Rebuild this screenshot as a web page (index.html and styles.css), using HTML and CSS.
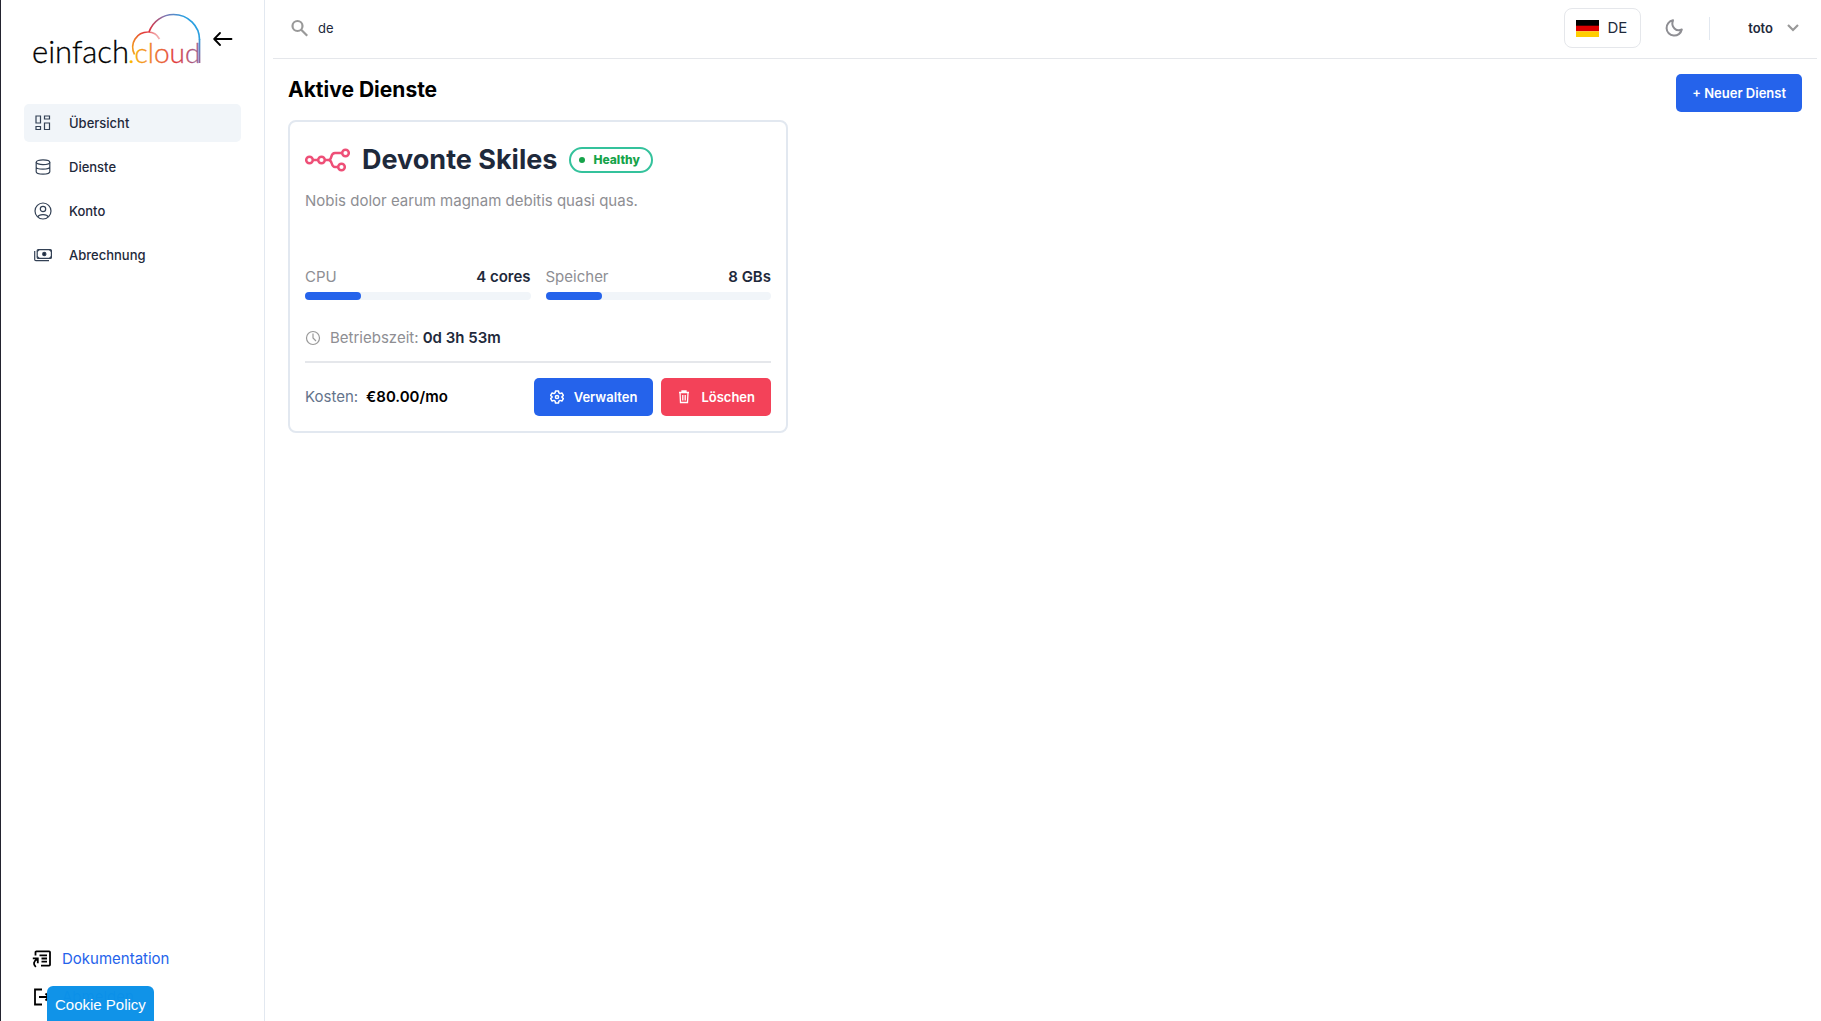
FILE: index.html
```html
<!DOCTYPE html>
<html lang="de">
<head>
<meta charset="utf-8">
<meta name="viewport" content="width=device-width, initial-scale=1">
<title>einfach.cloud – Übersicht</title>
<link rel="stylesheet" href="styles.css">
</head>
<body>
<div class="app">
  <aside class="sidebar">
    <div class="brand">
      <a class="brand-link" href="#" aria-label="einfach.cloud">
        <svg class="logo" width="170" height="54" viewBox="0 0 170 54">
          <defs>
            <linearGradient id="arc" gradientUnits="userSpaceOnUse" x1="116" y1="20" x2="168" y2="14">
              <stop offset="0" stop-color="#e0313d"/>
              <stop offset="0.35" stop-color="#7d78b4"/>
              <stop offset="0.7" stop-color="#2a9fe0"/>
              <stop offset="1" stop-color="#2a9fe0"/>
            </linearGradient>
            <linearGradient id="stem" gradientUnits="userSpaceOnUse" x1="0" y1="24" x2="0" y2="52">
              <stop offset="0" stop-color="#2a9fe0"/>
              <stop offset="1" stop-color="#a0608c"/>
            </linearGradient>
            <linearGradient id="puff" gradientUnits="userSpaceOnUse" x1="100" y1="38" x2="127" y2="24">
              <stop offset="0" stop-color="#f39c1f"/>
              <stop offset="0.6" stop-color="#e2373c"/>
              <stop offset="1" stop-color="#e2373c" stop-opacity="0.3"/>
            </linearGradient>
            <linearGradient id="word" gradientUnits="userSpaceOnUse" x1="97" y1="0" x2="168" y2="0">
              <stop offset="0" stop-color="#fbb900"/>
              <stop offset="0.3" stop-color="#ee7d2b"/>
              <stop offset="0.65" stop-color="#e03a3e"/>
              <stop offset="1" stop-color="#8f6a9f"/>
            </linearGradient>
          </defs>
          <text class="logo-text" x="-1" y="51">einfach</text>
          <text class="logo-text logo-cloud" x="95" y="51" fill="url(#word)" stroke="url(#word)">.cloud</text>
          <path d="M101.500 42.500C96 31 104 20 115 20c5.500 0 9.500 3 11.500 7" fill="none" stroke="url(#puff)" stroke-width="1.700"/>
          <path d="M116 20C120 9 130 2.500 140.500 2.500c15 0 26 12 26 25" fill="none" stroke="url(#arc)" stroke-width="1.700"/>
          <path d="M166.500 27V51" fill="none" stroke="url(#stem)" stroke-width="1.700"/>
        </svg>
      </a>
      <button class="icon-button" type="button" aria-label="Menü einklappen">
        <svg width="20" height="14" viewBox="0 0 20 14" fill="none" stroke="#000" stroke-width="1.800" stroke-linecap="round" stroke-linejoin="round"><path d="M18.500 7H1.500M7 1 1.200 7 7 13"/></svg>
      </button>
    </div>
    <nav class="menu">
      <a class="menu-item active" href="#">
        <svg width="18" height="18" viewBox="0 0 18 18" fill="none" stroke="#334155" stroke-width="1.200"><path d="M2 2h4.500v7H2zM10.500 2h5v3h-5zM10.500 9h5v6.500h-5zM2 12.500h4.500v3H2z"/></svg>
        <span>Übersicht</span>
      </a>
      <a class="menu-item" href="#">
        <svg width="18" height="18" viewBox="0 0 18 18" fill="none" stroke="#334155" stroke-width="1.200"><ellipse cx="9" cy="4.200" rx="6.800" ry="2.400"/><path d="M2.200 4.200v9.600c0 1.300 3 2.400 6.800 2.400s6.800-1.100 6.800-2.400V4.200M2.200 9c0 1.300 3 2.200 6.800 2.200s6.800-.9 6.800-2.200"/></svg>
        <span>Dienste</span>
      </a>
      <a class="menu-item" href="#">
        <svg width="18" height="18" viewBox="0 0 18 18" fill="none" stroke="#334155" stroke-width="1.200"><circle cx="9" cy="9" r="8"/><circle cx="9" cy="7" r="2.700"/><path d="M3.800 15c.6-1.700 2.700-2.400 5.200-2.400s4.600.7 5.200 2.400"/></svg>
        <span>Konto</span>
      </a>
      <a class="menu-item" href="#">
        <svg width="18" height="18" viewBox="0 0 18 18" fill="none" stroke="#334155" stroke-width="1.200"><rect x="3.200" y="3.600" width="14.200" height="8.800" rx="1"/><path d="M.7 5v8.500c0 .8.500 1.200 1.200 1.200H15M3.200 5.600l2-2M17.400 5.600l-2-2M3.200 10.400l2 2M17.400 10.400l-2 2"/><circle cx="10.300" cy="8" r="1.600" fill="#1e293b"/></svg>
        <span>Abrechnung</span>
      </a>
    </nav>
    <div class="side-links">
      <a class="side-link" href="#">
        <svg width="20" height="18" viewBox="0 0 20 18" fill="none" stroke="#000" stroke-width="1.800"><path d="M3.500 5.500V2.200q0-.9.900-.9h12.700q.9 0 .9.900v12.600q0 .9-.9.900H9M7.500 5.300h7.500M9.500 8.500H15M9.500 11.700H15M.8 8.300h5v5M5.300 8.800C1.300 11.500 1 14 3.800 17"/></svg>
        <span>Dokumentation</span>
      </a>
      <a class="side-link" href="#">
        <svg width="20" height="18" viewBox="0 0 20 18" fill="none" stroke="#000" stroke-width="1.800"><path d="M10 1.500H3v15h7M7 9h10M13.500 5.500 17 9l-3.500 3.500"/></svg>
        <span>Abmelden</span>
      </a>
    </div>
  </aside>

  <div class="page">
    <header class="topbar">
      <label class="search">
        <svg width="18" height="18" viewBox="0 0 18 18" fill="none" stroke="#999" stroke-width="2.200"><circle cx="6.500" cy="7" r="5"/><path d="m10.200 10.700 6 6"/></svg>
        <input class="search-input" type="text" value="de" aria-label="Suche">
      </label>
      <div class="tools">
        <button class="lang" type="button">
          <svg width="23" height="17" viewBox="0 0 23 17"><path d="M0 0h23v6H0z" fill="#000"/><path d="M0 5.700h23v5.600H0z" fill="#d00"/><path d="M0 11.300h23V17H0z" fill="#ffce00"/></svg>
          <span>DE</span>
        </button>
        <button class="icon-button" type="button" aria-label="Dunkles Design">
          <svg width="18" height="18" viewBox="0 0 18 18" fill="none" stroke="#8e8e93" stroke-width="2" stroke-linejoin="round"><path d="M8 1.300A7.700 7.700 0 1 0 16.800 10.500C11.500 13.200 5.500 8 8 1.300Z"/></svg>
        </button>
        <span class="rule"></span>
        <button class="user" type="button">
          <span>toto</span>
          <svg width="12" height="8" viewBox="0 0 12 8" fill="none" stroke="#999" stroke-width="2.200"><path d="m1 1 5 5 5-5"/></svg>
        </button>
      </div>
    </header>

    <main class="content">
      <div class="heading">
        <h1 class="heading-title">Aktive Dienste</h1>
        <button class="button primary" type="button">+ Neuer Dienst</button>
      </div>
      <div class="cards">
        <article class="card">
          <div class="card-head">
            <svg width="45" height="24" viewBox="0 0 45 24" fill="none" stroke="#ee4f77" stroke-width="2.500"><circle cx="4.500" cy="12" r="3.300"/><circle cx="16.500" cy="12" r="3.300"/><circle cx="40.500" cy="5" r="3.300"/><circle cx="36.500" cy="19" r="3.300"/><path d="M8 12h5M20 12h3.500c4.500 0 1-7 6.500-7h7M23.500 12c4.500 0 2 7 6.500 7h3"/></svg>
            <h2 class="card-title">Devonte Skiles</h2>
            <span class="badge">Healthy</span>
          </div>
          <p class="card-text">Nobis dolor earum magnam debitis quasi quas.</p>
          <div class="meters">
            <div class="meter">
              <div class="meter-row"><span>CPU</span><strong>4 cores</strong></div>
              <div class="track"><div class="fill" style="width:25%"></div></div>
            </div>
            <div class="meter">
              <div class="meter-row"><span>Speicher</span><strong>8 GBs</strong></div>
              <div class="track"><div class="fill" style="width:25%"></div></div>
            </div>
          </div>
          <div class="uptime">
            <svg width="16" height="16" viewBox="0 0 16 16" fill="none" stroke="#999" stroke-width="1.200"><circle cx="8" cy="8" r="6.500"/><path d="M8 3.500V8l3 3"/></svg>
            <span>Betriebszeit: <strong>0d 3h 53m</strong></span>
          </div>
          <div class="card-foot">
            <div class="cost"><span>Kosten:</span><strong>€80.00/mo</strong></div>
            <div class="actions">
              <button class="button primary" type="button">
                <svg width="14" height="14" viewBox="0 0 14 14" fill="none" stroke="#fff" stroke-width="1.500" stroke-linejoin="round"><path d="M5.500 1h3l.4 1.900 1.200.7 1.800-.7 1.500 2.500L12 6.600v.8l1.400 1.200-1.500 2.500-1.800-.7-1.200.7-.4 1.900h-3l-.4-1.900-1.200-.7-1.800.7L.6 8.600 2 7.400v-.8L.6 5.400l1.500-2.500 1.800.7 1.200-.7z"/><circle cx="7" cy="7" r="1.600"/></svg>
                <span>Verwalten</span>
              </button>
              <button class="button danger" type="button">
                <svg width="14" height="14" viewBox="0 0 14 14" fill="none" stroke="#fff" stroke-width="1.300"><path d="M2 2.500h10M5 2.300V1h4v1.300M3 2.500l.5 10h7l.5-10M5.800 5v5.500M8.200 5v5.500"/></svg>
                <span>Löschen</span>
              </button>
            </div>
          </div>
        </article>
      </div>
    </main>
  </div>
</div>
<button class="cookie" type="button">Cookie Policy</button>
</body>
</html>
```
FILE: styles.css
```css
* { box-sizing: border-box; }

body {
  margin: 0;
  font-family: Inter, "Liberation Sans", sans-serif;
  font-size: 15px;
  line-height: 20px;
  color: #1e293b;
  background: #fff;
}

button, input { font: inherit; color: inherit; }
button { border: 0; padding: 0; background: none; cursor: pointer; }
a { color: inherit; text-decoration: none; }
h1, h2, p { margin: 0; }
svg { display: block; flex: none; }
strong { font-weight: 600; }

.app {
  display: flex;
  min-height: 100vh;
  border-left: 1px solid #23232f;
}

.sidebar {
  position: sticky;
  top: 0;
  display: flex;
  flex-direction: column;
  flex: none;
  width: 264px;
  height: 100vh;
  padding: 12px 23px 12px;
  border-right: 1px solid #e2e8f0;
}

.brand {
  display: flex;
  align-items: center;
  gap: 10px;
  height: 54px;
  padding-left: 9px;
  margin-bottom: 38px;
}

.logo { overflow: visible; }
.logo-text {
  font-family: Lato, sans-serif;
  font-size: 31px;
  font-weight: 300;
  stroke: #000;
  stroke-width: 0.3px;
}
.logo-cloud { font-size: 28px; stroke: url(#word); }

.icon-button { display: flex; align-items: center; }

.menu { display: flex; flex-direction: column; gap: 6px; }

.menu-item {
  display: flex;
  align-items: center;
  gap: 17px;
  height: 38px;
  padding: 0 10px;
  border-radius: 5px;
  font-size: 13px;
  font-weight: 500;
}
.menu-item.active { background: #f1f5f9; }

.side-links { display: flex; flex-direction: column; gap: 14px; margin-top: auto; }
.side-link {
  display: flex;
  align-items: center;
  gap: 10px;
  height: 24px;
  padding-left: 8px;
  color: #2563eb;
}

.page { flex: 1; min-width: 0; padding: 0 4px 0 8px; }

.topbar {
  display: flex;
  align-items: center;
  justify-content: space-between;
  height: 59px;
  padding: 0 18px 2px;
  border-bottom: 1px solid #e5e7eb;
}

.search { display: flex; align-items: center; gap: 9px; flex: 1; }
.search-input {
  flex: 1;
  min-width: 0;
  padding: 0;
  border: 0;
  outline: 0;
  background: none;
  font-size: 13px;
}

.tools { display: flex; align-items: center; }
.lang {
  display: flex;
  align-items: center;
  gap: 8px;
  height: 40px;
  padding: 0 13px 0 11px;
  margin-right: 24px;
  border: 1px solid #e5e7eb;
  border-radius: 8px;
}
.rule { width: 1px; height: 23px; margin: 0 38px 0 26px; background: #e2e8f0; }
.user { display: flex; align-items: center; gap: 14px; font-size: 13px; font-weight: 600; }

.content { padding: 15px 15px 24px; }

.heading { display: flex; align-items: flex-start; justify-content: space-between; }
.heading-title {
  font-size: 21px;
  line-height: 32px;
  font-weight: 700;
  color: #000;
}

.button {
  display: flex;
  align-items: center;
  gap: 10px;
  height: 38px;
  padding: 0 16px;
  border-radius: 5px;
  color: #fff;
  font-size: 13px;
  font-weight: 600;
}
.primary { background: #2563eb; }
.danger { background: #f34259; }

.cards {
  display: grid;
  grid-template-columns: repeat(3, 1fr);
  gap: 7px;
  margin-top: 8px;
}

.card {
  padding: 22px 15px 15px;
  border: 2px solid #e2e8f0;
  border-radius: 8px;
}
.card-head { display: flex; align-items: center; gap: 12px; height: 32px; }
.card-title { font-size: 27px; line-height: 32px; font-weight: 700; }

.badge {
  display: flex;
  align-items: center;
  gap: 8px;
  height: 26px;
  padding: 0 11px 0 8px;
  border: 2px solid #34c29c;
  border-radius: 13px;
  color: #16a34a;
  font-size: 12px;
  font-weight: 800;
}
.badge::before { content: ""; width: 6px; height: 6px; border-radius: 50%; background: #16a34a; }

.card-text { height: 76px; margin-top: 15px; color: #8e8e93; }

.meters { display: grid; grid-template-columns: 1fr 1fr; gap: 15px; }
.meter-row { display: flex; justify-content: space-between; color: #8e8e93; }
.meter-row strong, .uptime strong { color: #1e293b; }
.track { height: 8px; margin-top: 5px; border-radius: 4px; background: #f1f5f9; }
.fill { height: 8px; border-radius: 4px; background: #2563eb; }

.uptime {
  display: flex;
  align-items: center;
  gap: 9px;
  padding-bottom: 13px;
  margin-top: 28px;
  border-bottom: 2px solid #e5e7eb;
  color: #8e8e93;
}

.card-foot {
  display: flex;
  align-items: center;
  justify-content: space-between;
  margin-top: 15px;
}
.cost { display: flex; gap: 8px; color: #64748b; }
.cost strong { color: #000; }
.actions { display: flex; gap: 8px; }

.cookie {
  position: fixed;
  left: 47px;
  bottom: 0;
  height: 35px;
  padding: 2px 8px 0;
  border-radius: 6px 6px 0 0;
  background: #0c91e8;
  color: #fff;
  font-family: "Liberation Sans", sans-serif;
  font-size: 15px;
  opacity: 0.98;
}
```
